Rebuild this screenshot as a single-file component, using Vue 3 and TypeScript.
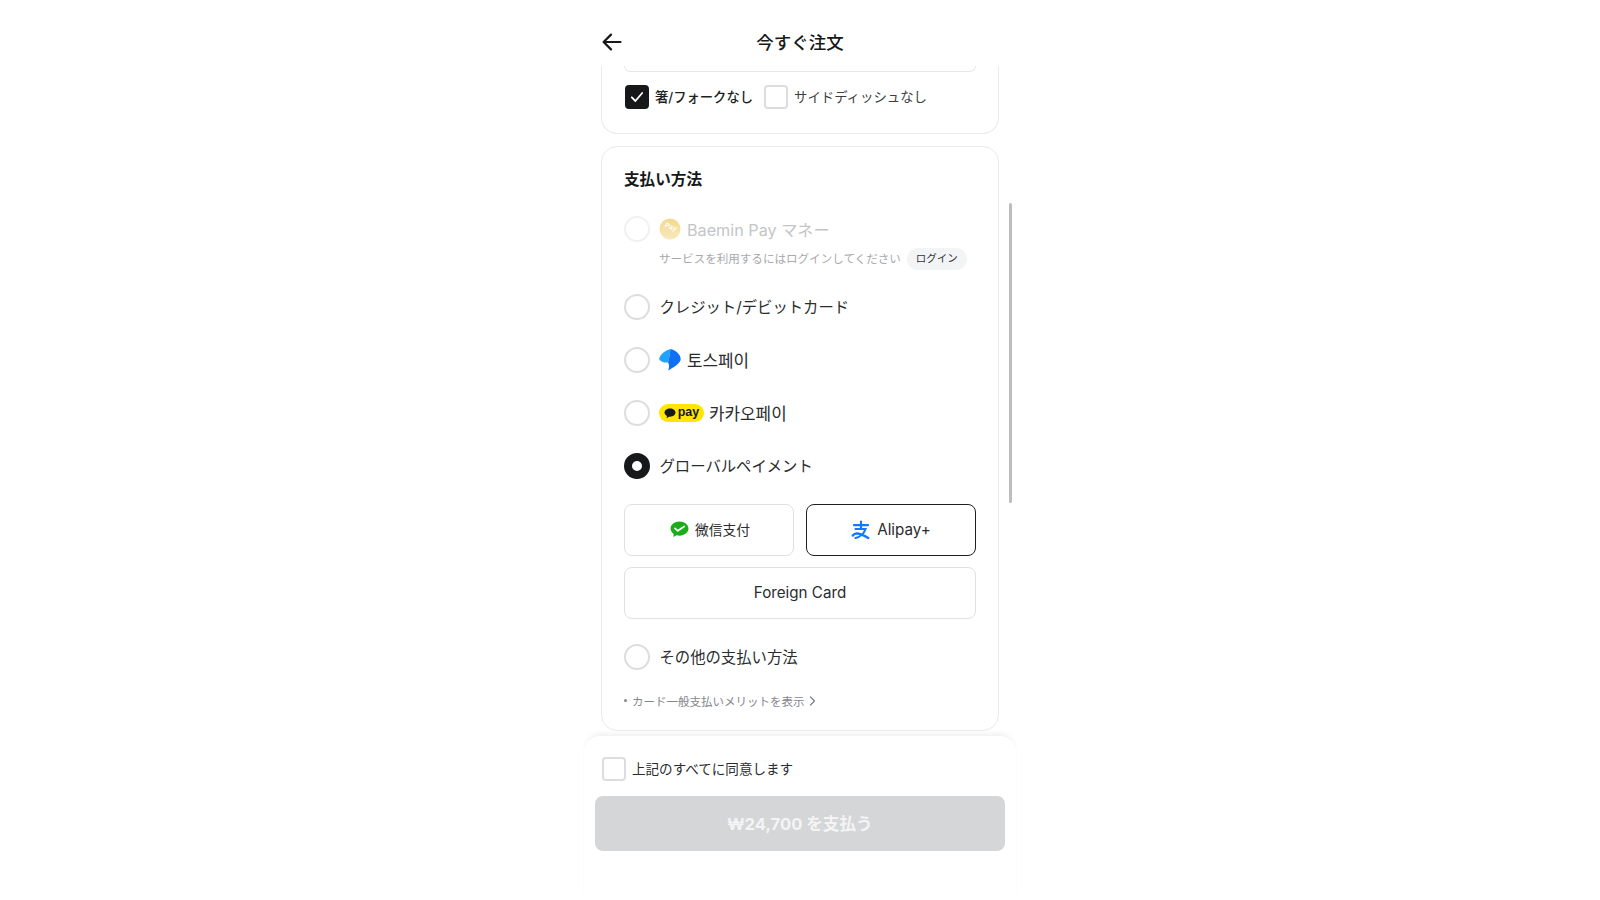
<script setup lang="ts">
interface Row { id: string; label: string; selected?: boolean; logo?: string }
const rows: Row[] = [
  { id: 'card', label: 'クレジット/デビットカード' },
  { id: 'toss', label: '토스페이', logo: 'toss' },
  { id: 'kakao', label: '카카오페이', logo: 'kakao' },
  { id: 'global', label: 'グローバルペイメント', selected: true },
]
</script>

<template>
  <div class="page">
    <div class="phone">
      <header class="header">
        <svg class="back" width="24" height="24" viewBox="0 0 24 24" fill="none" stroke="#16181a" stroke-width="2.2" stroke-linecap="round" stroke-linejoin="round">
          <path d="M20.5 12H3.8M11 4.6 3.6 12l7.4 7.4" />
        </svg>
        <h1 class="title">今すぐ注文</h1>
      </header>

      <div class="scroller">
        <section class="card card-cut">
          <div class="input-stub"></div>
          <div class="checks">
            <label class="check-item">
              <span class="box box-on">
                <svg width="16" height="16" viewBox="0 0 16 16" fill="none" stroke="#fff" stroke-width="1.8" stroke-linecap="round" stroke-linejoin="round"><path d="M2.8 8.3 6.4 12l6.8-8" /></svg>
              </span>
              <span class="check-text strong">箸/フォークなし</span>
            </label>
            <label class="check-item">
              <span class="box"></span>
              <span class="check-text">サイドディッシュなし</span>
            </label>
          </div>
        </section>

        <section class="card pay">
          <h2 class="pay-title">支払い方法</h2>

          <div class="baemin">
            <div class="row-head">
              <span class="radio radio-off"></span>
              <svg class="coin" width="22" height="22" viewBox="0 0 22 22">
                <defs>
                  <linearGradient id="coinG" x1="0" y1="0" x2="0" y2="1">
                    <stop offset="0" stop-color="#f3d88f" />
                    <stop offset="1" stop-color="#f8e9bd" />
                  </linearGradient>
                </defs>
                <circle cx="11" cy="11" r="10.5" fill="url(#coinG)" />
                <text x="11" y="11" font-size="7" font-weight="700" fill="#fff" text-anchor="middle" font-family="Liberation Sans, sans-serif" transform="rotate(22 11 11)">Pay</text>
              </svg>
              <span class="baemin-label">Baemin Pay マネー</span>
            </div>
            <div class="baemin-sub">
              <span class="sub-text">サービスを利用するにはログインしてください</span>
              <span class="login">ログイン</span>
            </div>
          </div>

          <div v-for="r in rows" :key="r.id" class="row">
            <span class="radio" :class="{ 'radio-on': r.selected }"></span>
            <svg v-if="r.logo === 'toss'" class="toss-logo" width="22" height="22" viewBox="0 0 22 22">
              <path d="M0 10C1.500 5 6 1.500 11.500 0 10.800 4 10.500 9 9 13.500 5.500 14 2 13 0 10z" fill="#1ea4ff" />
              <path d="M11.500 0C16 1 21.700 5 21.700 10 21.700 14 15 18 9.200 21.500 10.500 18 10.200 15 9 13.500 10.500 9 10.800 4 11.500 0z" fill="#0f6ff5" />
            </svg>
            <span v-if="r.logo === 'kakao'" class="kakao-logo">
              <svg width="12" height="11" viewBox="0 0 12 11"><path d="M6 .5C2.900.5.500 2.300.500 4.600c0 1.500 1 2.800 2.500 3.500L2.500 10.300 5 8.700h1c3.100 0 5.500-1.800 5.500-4.100S9.100.5 6 .5z" fill="#16181a" /></svg>
              <span class="kakao-pay">pay</span>
            </span>
            <span class="row-label" :class="r.logo">{{ r.label }}</span>
          </div>

          <div class="options">
            <button class="opt opt-wechat">
              <svg width="19" height="17" viewBox="0 0 20 18">
                <path d="M10 .5C4.700.5.500 3.900.500 8c0 2.300 1.300 4.300 3.300 5.700L3.500 17l3.300-2c1 .3 2.100.5 3.200.5 5.300 0 9.500-3.400 9.500-7.500S15.300.5 10 .5z" fill="#1aad19" />
                <path d="M5.200 7.800 8.200 10.400 15 5.800" fill="none" stroke="#fff" stroke-width="1.8" stroke-linecap="round" stroke-linejoin="round" />
              </svg>
              <span>微信支付</span>
            </button>
            <button class="opt opt-on">
              <svg width="20" height="20" viewBox="0 0 20 20" fill="none" stroke="#1677ff" stroke-linecap="round">
                <path d="M3 5.200h14M10 1.500v6.500" stroke-width="2.2" />
                <path d="M4.500 9h10c-1.300 4.300-5.500 8-10 9" stroke-width="2.2" />
                <path d="M1.800 15.500c2-3 5.500-3.500 15.500 2.500" stroke-width="2.4" />
              </svg>
              <span>Alipay+</span>
            </button>
            <button class="opt opt-wide">Foreign Card</button>
          </div>

          <div class="row row-other">
            <span class="radio"></span>
            <span class="row-label">その他の支払い方法</span>
          </div>

          <div class="note">
            <span class="dot"></span>
            <span>カード一般支払いメリットを表示</span>
            <svg width="7" height="10" viewBox="0 0 7 10" fill="none" stroke="#7f8387" stroke-width="1.3" stroke-linecap="round" stroke-linejoin="round"><path d="M1.500 1 5.500 5l-4 4" /></svg>
          </div>
        </section>
      </div>

      <footer class="sheet">
        <label class="agree">
          <span class="box"></span>
          <span class="agree-text">上記のすべてに同意します</span>
        </label>
        <button class="pay-btn">₩24,700 を支払う</button>
      </footer>

      <div class="thumb"></div>
    </div>
  </div>
</template>

<style>
html, body { margin: 0; background: #fff; }
</style>

<style scoped>
.page {
  width: 1600px;
  height: 900px;
  display: flex;
  justify-content: center;
  overflow: hidden;
  background: #fff;
  font-family: "Inter", "Noto Sans CJK JP", sans-serif;
  color: #1d1f21;
}
.phone {
  position: relative;
  width: 432px;
  height: 900px;
  display: flex;
  flex-direction: column;
}
.header {
  height: 66px;
  flex: none;
  position: relative;
  display: flex;
  align-items: center;
  justify-content: center;
  padding-top: 19px;
  box-sizing: border-box;
}
.back { position: absolute; left: 15.5px; top: 30px; }
.title {
  margin: 0;
  font-size: 17.5px;
  font-weight: 500;
  line-height: 47px;
  color: #16181a;
}
.scroller {
  flex: 1;
  min-height: 0;
  overflow: hidden;
  padding: 0 17px;
  display: flex;
  flex-direction: column;
  gap: 12px;
}
.card {
  border: 1.5px solid #e9eaea;
  border-radius: 16px;
  box-sizing: border-box;
  background: #fff;
  padding: 0 22px;
}
.card-cut {
  border-top: 0;
  border-top-left-radius: 0;
  border-top-right-radius: 0;
  height: 67.5px;
  flex: none;
}
.input-stub {
  height: 5px;
  border: 1.5px solid #e6e7e8;
  border-top: 0;
  border-radius: 0 0 10px 10px;
}
.checks {
  display: flex;
  gap: 11px;
  margin: 13px 0 0 1px;
}
.check-item, .agree { display: flex; align-items: center; gap: 6px; }
.box {
  width: 24px;
  height: 24px;
  box-sizing: border-box;
  border: 2px solid #dcddde;
  border-radius: 4px;
  display: flex;
  align-items: center;
  justify-content: center;
  flex: none;
}
.box-on { background: #16181a; border-color: #16181a; }
.check-text { font-size: 13.4px; color: #3c3e40; margin-bottom: 2px; }
.check-text.strong { font-size: 13.3px; font-weight: 500; color: #1d1f21; }
.pay { padding-top: 21px; height: 585px; flex: none; }
.pay-title {
  margin: 0;
  font-size: 15.6px;
  font-weight: 700;
  line-height: 24px;
  color: #16181a;
}
.baemin { margin-top: 24px; height: 77px; }
.row-head { display: flex; align-items: center; height: 26px; }
.radio {
  width: 26px;
  height: 26px;
  box-sizing: border-box;
  border: 2.5px solid #dcddde;
  border-radius: 50%;
  flex: none;
  background: #fff;
}
.radio-off { border-color: #f1f1f2; }
.radio-on { border: 8px solid #16181a; }
.row .radio { margin-top: 1px; }
.coin { margin-left: 9px; }
.baemin-label { margin-left: 6px; font-size: 16.2px; color: #c4c5c7; }
.baemin-sub { display: flex; align-items: center; margin: 4px 0 0 35px; }
.sub-text { font-size: 11.55px; color: #a7a9ac; }
.login {
  margin: 2px 0 0 6px;
  height: 22px;
  line-height: 22px;
  padding: 0 9px;
  border-radius: 11px;
  background: #f3f4f5;
  font-size: 10.5px;
  color: #33363a;
}
.row {
  display: flex;
  align-items: center;
  height: 27px;
  margin-bottom: 26px;
}
.row-label { margin-left: 9.5px; font-size: 15.35px; color: #2a2c2e; }
.row-label.toss, .row-label.kakao { font-size: 16.9px; }
.row-label.toss { margin-left: 6px; }
.row-label.kakao { margin-left: 5px; }
.toss-logo { margin: 2px 0 0 9px; }
.kakao-logo {
  margin: 2px 0 0 9px;
  width: 45px;
  height: 18px;
  border-radius: 9px;
  background: #ffe500;
  display: flex;
  align-items: center;
  justify-content: center;
  gap: 2px;
  flex: none;
}
.kakao-pay { font-family: "Liberation Sans", sans-serif; font-size: 12.5px; font-weight: 700; line-height: 16px; color: #16181a; margin-bottom: 2px; }
.options {
  display: grid;
  grid-template-columns: 1fr 1fr;
  gap: 11px 12px;
  margin-top: -1px;
}
.opt {
  height: 52px;
  border: 1.5px solid #dfe0e1;
  border-radius: 8px;
  background: #fff;
  display: flex;
  align-items: center;
  justify-content: center;
  gap: 6px;
  font: inherit;
  font-size: 15.2px;
  color: #2a2c2e;
  padding: 0;
}
.opt-wechat { font-size: 13.7px; padding-left: 2px; }
.opt-wechat span { margin-bottom: 2px; }
.opt-on { border-color: #1d1f21; }
.opt-wide { grid-column: 1 / -1; }
.row-other { margin-top: 24px; margin-bottom: 0; }
.note {
  display: flex;
  align-items: center;
  margin-top: 23px;
  font-size: 11.5px;
  color: #84878b;
}
.dot { width: 3px; height: 3px; border-radius: 50%; background: #84878b; margin-right: 5px; }
.note svg { margin-left: 4px; }
.sheet {
  flex: none;
  height: 164px;
  box-sizing: border-box;
  background: #fff;
  border-radius: 16px 16px 0 0;
  box-shadow: 0 -4px 6px -3px rgba(0, 0, 0, .09);
  padding: 21px 11px 0;
}
.agree { margin-left: 7px; }
.agree-text { font-size: 13.55px; color: #2a2c2e; margin-bottom: 2px; }
.pay-btn {
  display: block;
  width: 100%;
  height: 55px;
  margin-top: 15px;
  padding: 0 0 2px;
  border: 0;
  border-radius: 8px;
  background: #d5d6d8;
  color: #f4f4f5;
  font: inherit;
  font-size: 16.6px;
  font-weight: 700;
}
.thumb {
  position: absolute;
  left: 425px;
  top: 203px;
  width: 3px;
  height: 300px;
  border-radius: 2px;
  background: #bcbdbe;
}
</style>
